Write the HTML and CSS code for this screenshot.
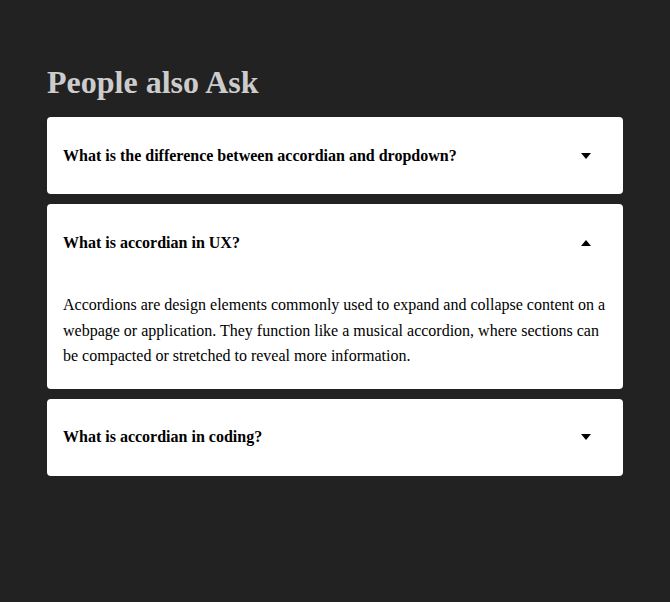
FILE: index.html
```html
<!DOCTYPE html>
<html lang="en">
<head>
<meta charset="utf-8">
<title>People also Ask</title>
<link rel="stylesheet" href="styles.css">
</head>
<body>
<main class="faq">
  <h1 class="faq-title">People also Ask</h1>
  <div class="faq-list">
    <section class="item">
      <div class="item-head">
        <h2 class="question">What is the difference between accordian and dropdown?</h2>
        <svg class="caret" width="10" height="6" viewBox="0 0 10 6"><path d="M0 0h10L5 6z" fill="#000"/></svg>
      </div>
    </section>
    <section class="item">
      <div class="item-head">
        <h2 class="question">What is accordian in UX?</h2>
        <svg class="caret" width="10" height="6" viewBox="0 0 10 6"><path d="M0 6h10L5 0z" fill="#000"/></svg>
      </div>
      <p class="answer">Accordions are design elements commonly used to expand and collapse content on a webpage or application. They function like a musical accordion, where sections can be compacted or stretched to reveal more information.</p>
    </section>
    <section class="item">
      <div class="item-head">
        <h2 class="question">What is accordian in coding?</h2>
        <svg class="caret" width="10" height="6" viewBox="0 0 10 6"><path d="M0 0h10L5 6z" fill="#000"/></svg>
      </div>
    </section>
  </div>
</main>
</body>
</html>
```

FILE: styles.css
```css
html, body {
  margin: 0;
  padding: 0;
  background: #222222;
  font-family: "Liberation Serif", "Times New Roman", serif;
}

.faq {
  padding: 64px 47px 0 47px;
}

.faq-title {
  margin: 0 0 16px 0;
  font-size: 32px;
  font-weight: bold;
  line-height: 37px;
  color: #cccccc;
}

.faq-list {
  display: flex;
  flex-direction: column;
  gap: 10px;
}

.item {
  background: #ffffff;
  border-radius: 4px;
}

.item-head {
  display: flex;
  align-items: center;
  justify-content: space-between;
  height: 77px;
  padding: 0 32px 0 16px;
}

.question {
  margin: 0;
  font-size: 16px;
  font-weight: bold;
  color: #000;
}

.caret {
  display: block;
}

.answer {
  margin: 0;
  padding: 11px 16px 20px 16px;
  font-size: 16px;
  line-height: 25.6px;
  color: #000;
}
```
